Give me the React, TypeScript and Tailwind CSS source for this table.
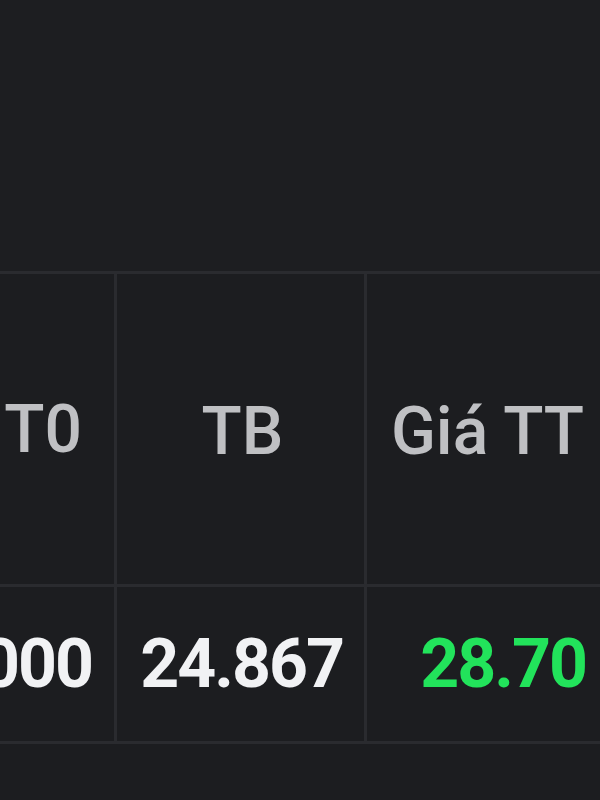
export default function App() {
  return (
    <div className="w-[600px] h-[800px] overflow-hidden bg-[#1c1d20] font-['Roboto','Liberation_Sans',sans-serif]">
      <div className="h-[271px] bg-[#1d1e21]" />
      <div className="w-[700px] border-t-[3px] border-[#2a2b2f]">
        {/* header row */}
        <div className="flex h-[313px] border-b-[3px] border-[#2a2b2f] text-[66px] font-medium text-[#bfc0c3]">
          <div className="w-[117px] shrink-0 border-r-[3px] border-[#2a2b2f] flex items-center justify-end pr-[32px] whitespace-nowrap">
            KL T0
          </div>
          <div className="w-[250px] shrink-0 border-r-[3px] border-[#2a2b2f] flex items-center justify-center pl-[4px] pt-[4px]">
            TB
          </div>
          <div className="w-[241px] shrink-0 flex items-center justify-center pt-[4px] whitespace-nowrap">
            Giá TT
          </div>
        </div>
        {/* data row */}
        <div className="flex h-[157px] border-b-[3px] border-[#2a2b2f] text-[68px] font-bold tracking-[-2px]">
          <div className="w-[117px] shrink-0 border-r-[3px] border-[#2a2b2f] flex items-center justify-end pr-[22px] text-[#f1f2f4] whitespace-nowrap">
            1.000
          </div>
          <div className="w-[250px] shrink-0 border-r-[3px] border-[#2a2b2f] flex items-center justify-end pr-[21px] text-[#f1f2f4]">
            24.867
          </div>
          <div className="w-[241px] shrink-0 flex items-center justify-end pr-[22px] text-[#22e35b]">
            28.70
          </div>
        </div>
      </div>
    </div>
  );
}
